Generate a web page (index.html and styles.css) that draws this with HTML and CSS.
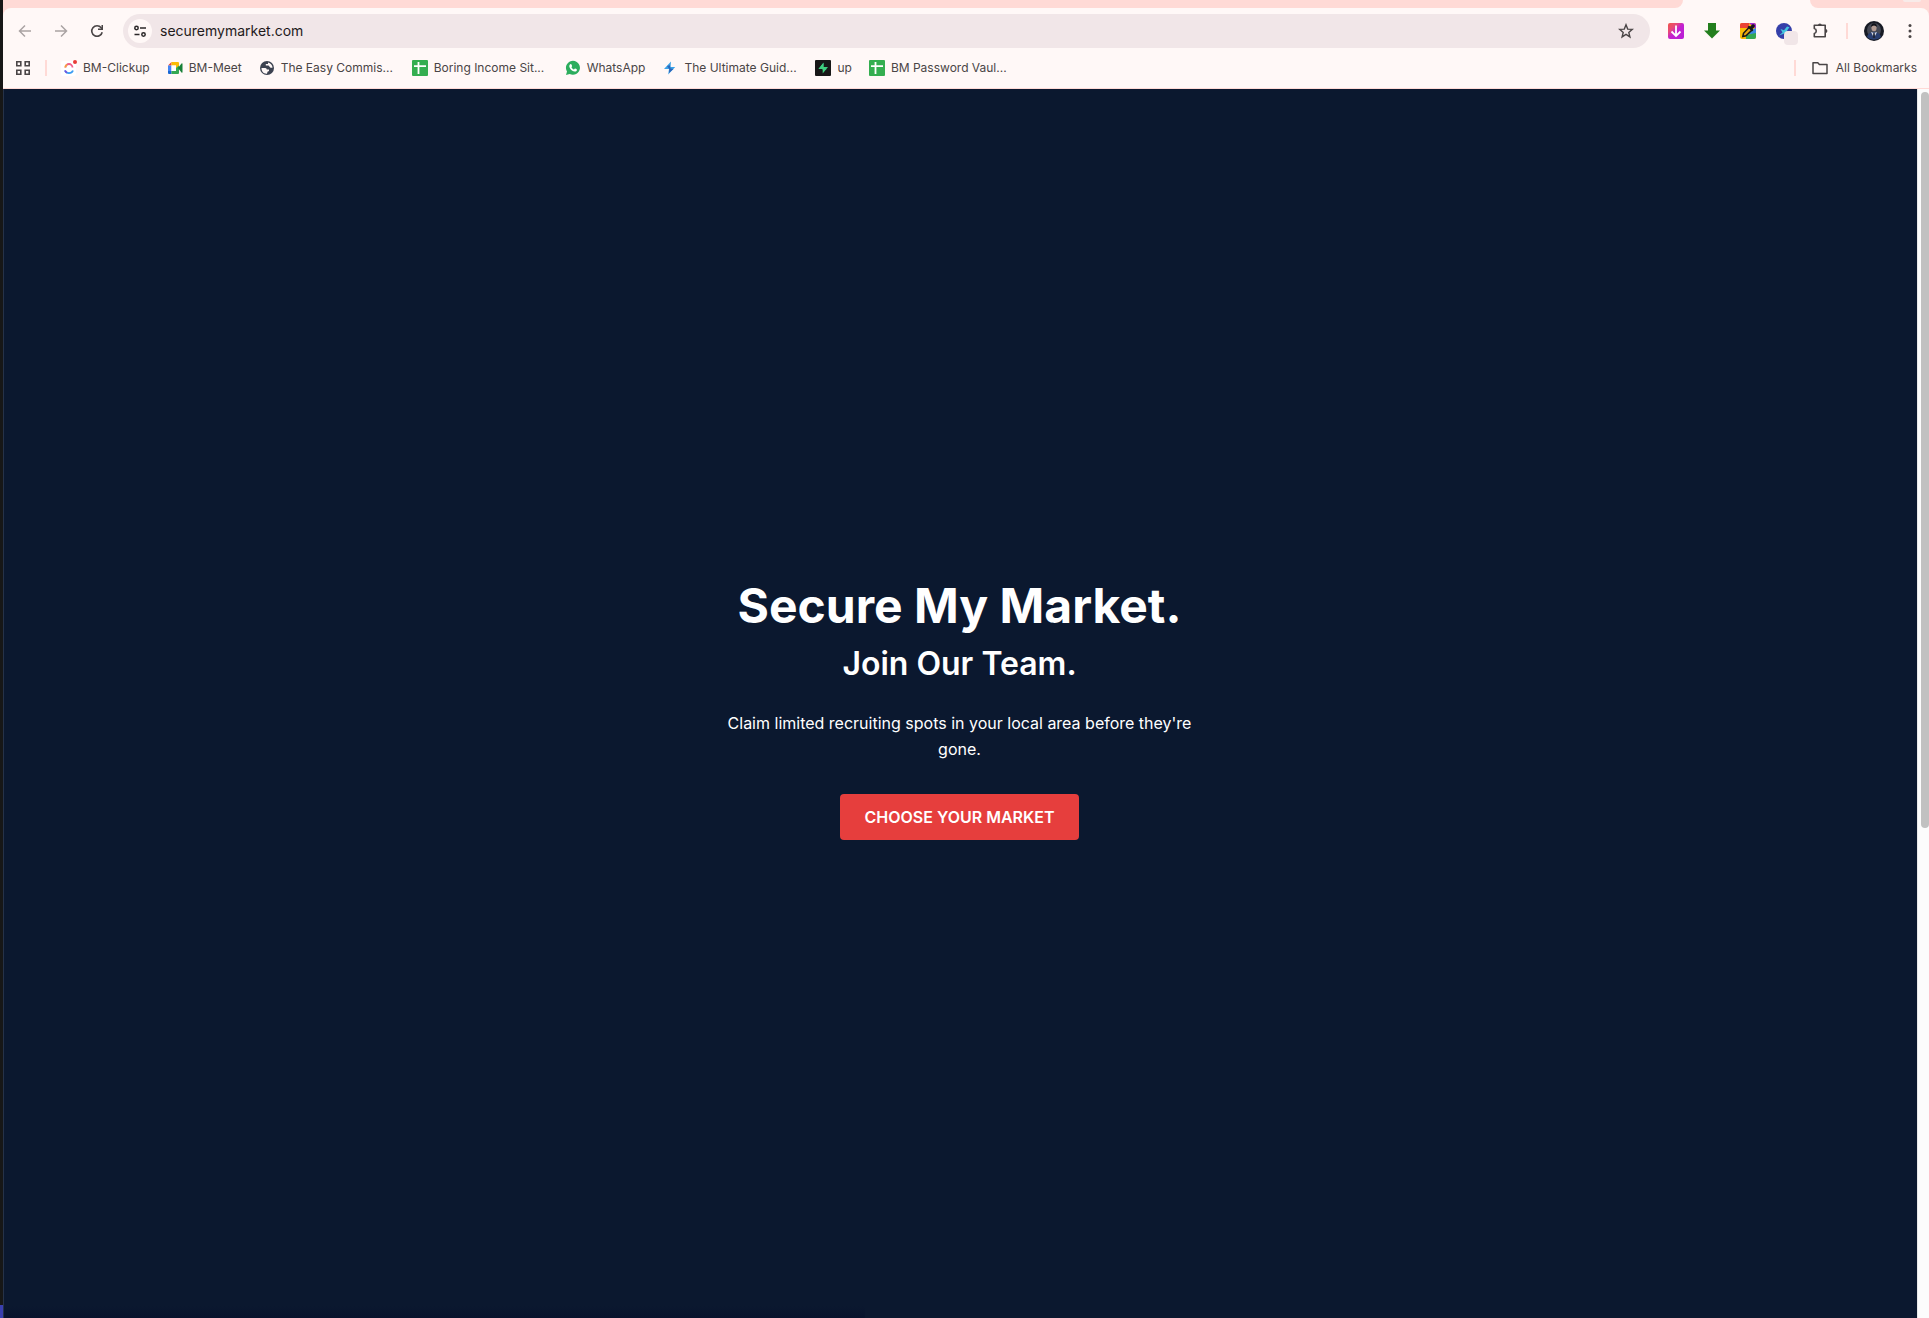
FILE: index.html
```html
<!DOCTYPE html>
<html lang="en">
<head>
<meta charset="utf-8">
<title>Secure My Market</title>
<link rel="stylesheet" href="styles.css">
</head>
<body>
<div class="desktop-edge"></div>
<div class="browser">
  <header class="chrome">
    <div class="tabstrip"><div class="tabs-left"></div><div class="tab-active"></div><div class="tabs-right"><span class="tab-search"></span></div></div>
    <div class="bars">
      <div class="toolbar">
        <div class="group">
          <button class="tool muted" aria-label="Back"><svg width="16" height="16" viewBox="0 0 16 16"><path d="M14 8H3M8 2.5 2.5 8 8 13.5" fill="none" stroke="currentColor" stroke-width="1.5"/></svg></button>
          <button class="tool muted" aria-label="Forward"><svg width="16" height="16" viewBox="0 0 16 16"><path d="M2 8h11M8 2.5 13.500 8 8 13.500" fill="none" stroke="currentColor" stroke-width="1.5"/></svg></button>
          <button class="tool" aria-label="Reload"><svg width="16" height="16" viewBox="0 0 16 16"><path d="M13.200 9.200A5.300 5.300 0 1 1 12.200 4.700L13.500 6" fill="none" stroke="currentColor" stroke-width="1.600"/><path d="M14 2v5H9V5.600h3.500V2z" fill="currentColor"/></svg></button>
        </div>
        <div class="omnibox">
          <button class="site-info" aria-label="View site information"><svg width="14" height="14" viewBox="0 0 14 14" fill="none" stroke="currentColor" stroke-width="1.500"><circle cx="3.500" cy="4" r="1.700"/><path d="M7 4h6M1.500 10.500h5"/><circle cx="10.500" cy="10.500" r="1.700"/></svg></button>
          <input class="url" type="text" aria-label="Address" value="securemymarket.com">
          <button class="tool" aria-label="Bookmark this tab"><svg width="16" height="16" viewBox="0 0 16 16"><path d="m8 1.800 1.700 4.300 4.600.3-3.500 3 1.100 4.500L8 11.400l-3.900 2.500 1.100-4.500-3.500-3 4.600-.3z" fill="none" stroke="currentColor" stroke-width="1.400"/></svg></button>
        </div>
        <div class="group">
          <button class="tool" aria-label="Video downloader"><svg width="16" height="16" viewBox="0 0 16 16"><defs><linearGradient id="dl" x1="0" y1="0" x2="1" y2="1"><stop offset="0" stop-color="#f0564a"/><stop offset=".3" stop-color="#e84a78"/><stop offset=".5" stop-color="#c322cf"/><stop offset="1" stop-color="#b81fd8"/></linearGradient></defs><rect width="16" height="16" rx="2" fill="url(#dl)"/><path d="M8 2.500v10M3.500 8.500 8 13l4.500-4.500" fill="none" stroke="#fff" stroke-width="1.800"/></svg></button>
          <button class="tool" aria-label="Downloads"><svg width="16" height="16" viewBox="0 0 16 16"><path d="M4 0h8v7.500h4L8 15.500 0 7.500h4z" fill="#237e1d"/></svg></button>
          <button class="tool" aria-label="Color picker"><svg width="16" height="16" viewBox="0 0 16 16"><rect width="16" height="16" rx="2" fill="#fbbc05"/><path d="M0 5V2a2 2 0 0 1 2-2h7v5z" fill="#ea4335"/><path d="M9 0h5a2 2 0 0 1 2 2v4z" fill="#a32ad0"/><path d="M16 5v6H8V8z" fill="#3c8be0"/><path d="M16 10v4a2 2 0 0 1-2 2H6v-4z" fill="#34a853"/><path d="m2.800 13.500.7-3.200L9.200 4.300 12 7l-6 5.700z" fill="#e8a510" stroke="#171717" stroke-width="1.500"/><path d="M7.500 4 9 2.700l1.200.7L12.200 1.500c1.700-1 3.500.6 2.300 2.400L12.600 6l.7 1.200-1.300 1.300z" fill="#171717"/></svg></button>
          <button class="tool badge-host" aria-label="Extension"><svg width="16" height="16" viewBox="0 0 16 16"><circle cx="8" cy="8" r="8" fill="#353fa9"/><path d="M3 12.500 6.500 9.500l-2-3.500 3.500 1.200L11 3.500l2.500.7-2.500 3.300L13 10l-3-.5-3 1.500z" fill="#42c5df"/></svg><span class="badge"></span></button>
          <button class="tool" aria-label="Extensions"><svg width="18" height="18" viewBox="0 0 18 18"><path d="M3.300 3.300h10.900v11.400H3.300v-3.200c2.600-.6 2.600-4.400 0-5z" fill="none" stroke="currentColor" stroke-width="1.600" stroke-linejoin="round"/><path d="M7 3.300a1.900 1.900 0 0 1 3.800 0zM14.500 7.100a1.900 1.900 0 0 1 0 3.800z" fill="currentColor"/></svg></button>
          <span class="divider"></span>
          <button class="tool" aria-label="Profile"><svg width="20" height="20" viewBox="0 0 20 20"><circle cx="10" cy="10" r="10" fill="#171a24"/><circle cx="10" cy="9" r="7" fill="#454854"/><path d="M3 16c1-4 4-5 7-5s6 1 7 5a10 10 0 0 1-14 0z" fill="#293e70"/><ellipse cx="10" cy="6.800" rx="2.600" ry="3.500" fill="#b29a91"/><path d="M7 6c0-5 6-5 6 0-2-2-4-2-6 0z" fill="#11131a"/><path d="m7 11 3 6 3-6-3 1z" fill="#d9dce5"/><path d="m9.300 12h1.400l.5 5h-2.400z" fill="#202638"/></svg></button>
          <button class="tool" aria-label="Menu"><svg width="16" height="16" viewBox="0 0 16 16" fill="currentColor"><circle cx="8" cy="2.500" r="1.500"/><circle cx="8" cy="8" r="1.500"/><circle cx="8" cy="13.500" r="1.500"/></svg></button>
        </div>
      </div>
      <nav class="bookmarks" aria-label="Bookmarks">
        <button class="apps" aria-label="Apps"><svg width="16" height="16" viewBox="0 0 16 16" fill="none" stroke="currentColor" stroke-width="1.600"><path d="M1.800 1.800h4v4h-4zM10.200 1.800h4v4h-4zM1.800 10.200h4v4h-4zM10.200 10.200h4v4h-4z"/></svg></button>
        <span class="divider"></span>
        <div class="links">
          <a class="bookmark" href="#"><svg width="16" height="16" viewBox="0 0 16 16"><rect y="1" width="15" height="15" rx="2" fill="#fff"/><path d="M4.500 7.500a3.500 3.500 0 0 1 7 0" fill="none" stroke="#f0608c" stroke-width="1.800"/><path d="M4.200 7.500A3.500 3.500 0 0 1 6 4.600" fill="none" stroke="#f5a142" stroke-width="1.800"/><path d="M4 10.500c1.500 3.600 6.500 3.600 8 0" fill="none" stroke="#3b9cf2" stroke-width="1.800"/><path d="M4 10.500a4.400 4.400 0 0 0 2 2.300" fill="none" stroke="#7652e0" stroke-width="1.800"/><circle cx="14" cy="2" r="2" fill="#e93b36"/></svg><span>BM-Clickup</span></a>
          <a class="bookmark" href="#"><svg width="16" height="16" viewBox="0 0 16 16"><path d="M1 5.500 4.500 2v3.500z" fill="#ea4335"/><path d="M1 5.500h3.500V11H1z" fill="#4285f4"/><path d="M1 11h3.500v3H2a1 1 0 0 1-1-1z" fill="#1967d2"/><path d="M4.500 2H11a1 1 0 0 1 1 1v4L9 9V5.500H4.500z" fill="#fbbc04"/><path d="M4.500 5.500H9V11H4.500z" fill="#fff"/><path d="M4.500 11H9V8l3-2.500V13a1 1 0 0 1-1 1H4.500z" fill="#34a853"/><path d="m11 8 3.500-4.500q1-.8 1 .5v8q0 1.300-1 .5z" fill="#188038"/></svg><span>BM-Meet</span></a>
          <a class="bookmark long" href="#"><svg width="16" height="16" viewBox="0 0 16 16"><circle cx="8" cy="8" r="7" fill="#3c4250"/><path d="M2.500 8h3.800q1.500 0 1.500 1.500H10v1.500q-2 0-2 2.700C4.500 14 2.300 11 2.500 8zM9 2.400v1.700H6.800v1.500H9.500l2 2.200h2c0-2.500-1.700-4.800-4.500-5.400z" fill="#fff8f7"/></svg><span>The Easy Commis...</span></a>
          <a class="bookmark long" href="#"><svg width="16" height="16" viewBox="0 0 16 16"><rect width="16" height="16" rx="1" fill="#34ae50"/><path d="M2 6.200h12M6.500 2v12" stroke="#fff" stroke-width="1.800"/></svg><span>Boring Income Sit...</span></a>
          <a class="bookmark" href="#"><svg width="16" height="16" viewBox="0 0 16 16"><path d="M1 15l1-3.500A7 7 0 1 1 4.700 14z" fill="#2cad5d"/><path d="M4.700 4.800c1.300-1.500 1.800-.6 2.400 1.400l-.7 1c.8 1.300 1.500 1.900 2.600 2.400l.9-1c1.800.5 2.500.9 1.700 2.300-3.300 2.700-8.900-3.400-6.900-6.100z" fill="#fff"/></svg><span>WhatsApp</span></a>
          <a class="bookmark long" href="#"><svg width="16" height="16" viewBox="0 0 16 16"><path d="M9 1.500 2 9h5l-.8 5.500L13.200 7H8.500z" fill="#3ba2e8"/><path d="m5 6 3-.8.5 3.300 3 .5L7 13l.3-4z" fill="#2c66b8"/></svg><span>The Ultimate Guid...</span></a>
          <a class="bookmark" href="#"><svg width="16" height="16" viewBox="0 0 16 16"><rect width="16" height="16" rx="1" fill="#171717"/><path d="M8.500 2.500 3.500 9h4.200v1H12L8.300 9z" fill="#3ecf8e"/><path d="M7.700 13.500V9H3.500l5-6v4H13z" fill="#3ecf7e"/></svg><span>up</span></a>
          <a class="bookmark long" href="#"><svg width="16" height="16" viewBox="0 0 16 16"><rect width="16" height="16" rx="1" fill="#34ae50"/><path d="M2 6.200h12M6.500 2v12" stroke="#fff" stroke-width="1.800"/></svg><span>BM Password Vaul...</span></a>
        </div>
        <span class="divider"></span>
        <a class="bookmark all" href="#"><svg width="16" height="16" viewBox="0 0 16 16"><path d="M1 2.700h4.800l1.600 1.800H15v9H1z" fill="none" stroke="currentColor" stroke-width="1.500" stroke-linejoin="round"/></svg><span>All Bookmarks</span></a>
      </nav>
    </div>
  </header>
  <div class="viewport">
    <main class="hero">
      <h1>Secure My Market.</h1>
      <h2>Join Our Team.</h2>
      <p>Claim limited recruiting spots in your local area before they're gone.</p>
      <button class="cta">CHOOSE YOUR MARKET</button>
    </main>
    <div class="scrollbar"><div class="thumb"></div></div>
  </div>
</div>
</body>
</html>
```
FILE: styles.css
```css
* { box-sizing: border-box; }
body {
  margin: 0;
  min-height: 100vh;
  display: flex;
  font-family: Inter, "Liberation Sans", sans-serif;
  background: #0b182f;
}
button { border: 0; padding: 0; background: none; color: inherit; font: inherit; }
svg { display: block; flex: none; }

.desktop-edge {
  width: 3px;
  background: linear-gradient(to top, #3a3fae 13px, #171717 13px);
}
.browser { flex: 1; min-width: 0; display: flex; flex-direction: column; }

.chrome { background: #ffdad6; color: #4a4546; border-bottom: 1px solid #ffdad6; }
.tabstrip { display: flex; height: 8px; background: #fff8f7; }
.tabs-left { flex: 1; background: #ffdad6; border-bottom-right-radius: 8px; }
.tab-active { width: 127px; }
.tabs-right {
  width: 119px;
  padding-right: 8px;
  display: flex;
  justify-content: flex-end;
  background: #ffdad6;
  border-bottom-left-radius: 8px;
}
.tab-search { width: 18px; height: 2px; background: #f8ebe9; border-radius: 0 0 8px 8px; }
.bars { background: #fff8f7; border-radius: 8px 8px 0 0; }

.toolbar { display: flex; align-items: center; gap: 12px; padding: 6px 5px 0 8px; }
.group { display: flex; align-items: center; gap: 8px; }
.tool { width: 28px; height: 28px; display: flex; align-items: center; justify-content: center; }
.muted { color: #aaa3a3; }
.badge-host { position: relative; }
.badge {
  position: absolute;
  right: 0;
  bottom: 0;
  width: 14px;
  height: 14px;
  border-radius: 4px;
  background: #f1e6e8;
}
.divider { width: 2px; height: 16px; background: #ffdad6; }
.group .divider { margin: 0 4px; }
.omnibox {
  flex: 1;
  height: 34px;
  display: flex;
  align-items: center;
  padding: 0 10px 0 5px;
  border-radius: 17px;
  background: #f1e6e8;
}
.site-info {
  width: 24px;
  height: 24px;
  display: flex;
  align-items: center;
  justify-content: center;
  border-radius: 50%;
  background: #fff8f7;
  color: #2b2728;
}
.url {
  flex: 1;
  min-width: 0;
  border: 0;
  outline: 0;
  padding: 0 8px;
  background: none;
  font: 14px/20px Inter, "Liberation Sans", sans-serif;
  color: #1f1a1b;
}

.bookmarks { display: flex; align-items: center; height: 40px; padding: 0 12px; }
.apps { margin-right: 14px; }
.links { flex: 1; display: flex; gap: 17px; margin-left: 14px; }
.bookmark {
  display: flex;
  align-items: center;
  gap: 6px;
  font-size: 12px;
  line-height: 16px;
  color: #4a4546;
  text-decoration: none;
  white-space: nowrap;
}
.long span { width: 114px; }
.all { gap: 8px; margin-left: 16px; }

.viewport { flex: 1; display: flex; }
.hero {
  flex: 1;
  display: flex;
  flex-direction: column;
  align-items: center;
  justify-content: center;
  padding: 8px 2px 0 0;
  border-left: 1px solid #263248;
  color: #fff;
  text-align: center;
  background: linear-gradient(to top, #08132d, #0b182f 12px) left / 45% no-repeat #0b182f;
}
h1 { margin: 0 0 8px; font-size: 48px; line-height: 60px; font-weight: 700; }
h2 { margin: 0 0 26px; font-size: 32px; line-height: 40px; font-weight: 600; }
p { margin: 0 0 32px; max-width: 480px; font-size: 16px; line-height: 26px; font-weight: 400; }
.cta {
  padding: 12px 24px;
  border-radius: 4px;
  background: #e63e3d;
  color: #fff;
  font-size: 16px;
  line-height: 22px;
  font-weight: 600;
}
.scrollbar {
  width: 12px;
  padding: 3px 0 0 3px;
  background: #fcfcfc;
  border-left: 1px solid #e8e8e8;
}
.thumb { height: 60%; border-radius: 4px; background: #c1c1c1; }
```
